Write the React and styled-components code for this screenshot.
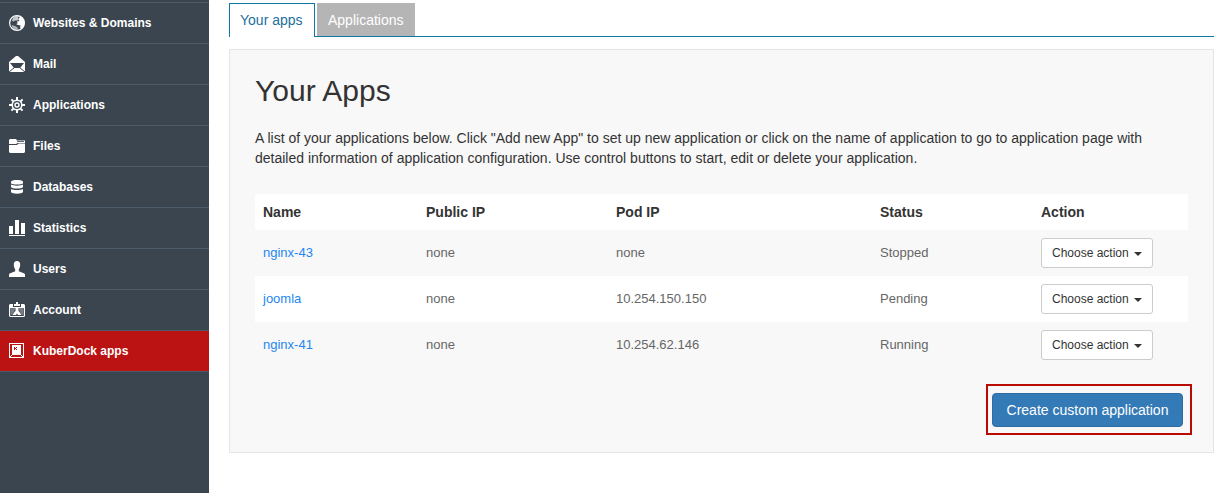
import React from "react";
import styled, { createGlobalStyle } from "styled-components";

const GlobalStyle = createGlobalStyle`
  *, *::before, *::after { box-sizing: border-box; }
  body {
    margin: 0;
    background: #fff;
    color: #333;
    font: 14px/20px "Liberation Sans", Arial, sans-serif;
  }
`;

const Page = styled.div`
  display: flex;
  min-height: 100vh;
`;

const Sidebar = styled.nav`
  flex: 0 0 209px;
  padding-top: 2px;
  background: #3a4550;
`;

const Menu = styled.ul`
  margin: 0;
  padding: 0;
  list-style: none;
  border-bottom: 1px solid #4c5b69;
`;

const MenuLink = styled.a`
  display: flex;
  align-items: center;
  gap: 8px;
  height: 41px;
  padding: 0 9px;
  border-top: 1px solid #4c5b69;
  background: ${(p) => (p.$active ? "#bb1313" : "transparent")};
  color: #fff;
  font-size: 12px;
  font-weight: bold;
  text-decoration: none;
`;

const Icon = styled.svg`
  flex: none;
  width: 16px;
  height: 16px;
  fill: #fff;
`;

const Main = styled.main`
  flex: 1;
  min-width: 0;
  padding: 3px 18px 40px 20px;
`;

const Tabs = styled.div`
  display: flex;
  gap: 2px;
  margin-bottom: 12px;
  border-bottom: 1px solid #0f76a3;
`;

const Tab = styled.a`
  min-width: ${(p) => (p.$active ? "86px" : "98px")};
  height: ${(p) => (p.$active ? "34px" : "33px")};
  margin-bottom: ${(p) => (p.$active ? "-1px" : "0")};
  padding: ${(p) => (p.$active ? "6px 10px" : "7px 11px")};
  border: ${(p) => (p.$active ? "1px solid #0f76a3" : "0")};
  border-bottom: 0;
  background: ${(p) => (p.$active ? "#fff" : "#b5b5b5")};
  color: ${(p) => (p.$active ? "#1d6f9c" : "#fff")};
  line-height: 20px;
  text-decoration: none;
`;

const Panel = styled.section`
  padding: 24px 25px 17px;
  border: 1px solid #e5e5e5;
  background: #f8f8f8;
`;

const Title = styled.h1`
  margin: 0 0 20px;
  font-size: 30px;
  font-weight: normal;
  line-height: 34px;
`;

const Intro = styled.p`
  margin: 0 0 26px;
`;

const Table = styled.table`
  width: 100%;
  table-layout: fixed;
  border-collapse: collapse;
`;

const Column = styled.col`
  width: ${(p) => p.$width}px;
`;

const HeadCell = styled.th`
  padding: 8px;
  background: #fff;
  text-align: left;
`;

const Row = styled.tr`
  background: ${(p) => (p.$striped ? "#fff" : "transparent")};
`;

const Cell = styled.td`
  height: 46px;
  padding: 8px;
  color: #666;
  font-size: 13px;
  line-height: 20px;
  vertical-align: middle;
`;

const AppLink = styled.a`
  color: #1e87f0;
  text-decoration: none;
`;

const SelectBox = styled.span`
  display: grid;
  width: 112px;
  align-items: center;
  > * { grid-area: 1 / 1; }
`;

const Select = styled.select`
  appearance: none;
  width: 100%;
  height: 30px;
  padding: 0 10px;
  border: 1px solid #ccc;
  border-radius: 3px;
  background: #fff;
  color: #333;
  font: 12px/18px "Liberation Sans", Arial, sans-serif;
`;

const Caret = styled.svg`
  justify-self: end;
  width: 8px;
  height: 4px;
  margin: 2px 11px 0 0;
  fill: #333;
  pointer-events: none;
`;

const Footer = styled.div`
  display: flex;
  justify-content: flex-end;
  margin: 16px -4px 0 0;
`;

const Highlight = styled.div`
  padding: 7px 7px 6px 4px;
  border: 2px solid #b90a04;
`;

const CreateButton = styled.button`
  display: block;
  min-width: 191px;
  height: 34px;
  padding: 0 12px;
  border: 1px solid #2e6da4;
  border-radius: 4px;
  background: #337ab7;
  color: #fff;
  font: 14px/20px "Liberation Sans", Arial, sans-serif;
`;

const icons = {
  globe: (
    <>
      <circle cx="8" cy="8" r="7.400" fill="none" stroke="#fff" strokeWidth="1.200" />
      <path d="M4 3 7 1l3 .3L9 3l1 1-1.500 1.500L6 5.400 4.500 6.500 3 6z" opacity=".7" />
      <path d="M10 1c3.400.8 5.500 3.600 5.500 7 0 2.400-1 4.400-2.700 5.800L11 13l.6-2.400L9 10 7 9l1.600-.6L8 6.600 10.500 6 9.400 4.200l1.200-1.400z" />
      <path d="M2.600 10 6 11l2.600 1.400L9 14.600l-3 .2-2.400-2z" opacity=".6" />
    </>
  ),
  mail: (
    <>
      <path d="M7 0h2l7 6v10H0V6z" />
      <path d="M1 7h14l-4 5H5z" fill="#3a4550" />
      <path d="M5.500 11.500 0 16M10.500 11.500 16 16" stroke="#3a4550" />
    </>
  ),
  gear: (
    <>
      <g stroke="#fff" strokeWidth="2">
        <path d="M8 0v3M8 13v3M0 8h3M13 8h3M2.400 2.400l2 2M11.600 11.600l2 2M13.600 2.400l-2 2M4.400 11.600l-2 2" />
      </g>
      <circle cx="8" cy="8" r="4.800" fill="none" stroke="#fff" strokeWidth="1.600" />
      <circle cx="8" cy="8" r="2" fill="none" stroke="#fff" strokeWidth="1.400" />
    </>
  ),
  folder: (
    <>
      <path d="M0 2 1 1h6l1 1.500h8V5H8.500L7 6H0z" />
      <path d="M0 7h8l1.500-1.500H16V14l-1 1H1l-1-1z" />
      <path d="M8 3.500h7" stroke="#3a4550" strokeWidth=".8" />
    </>
  ),
  database: (
    <>
      <path d="M2 3c0-2.600 12-2.600 12 0v1c0 2-12 2-12 0z" />
      <path d="M2 5.600c2 1.400 10 1.400 12 0V8c-1 2-11 2-12 0z" />
      <path d="M2 10c2 1.400 10 1.400 12 0v3c-1 2.300-11 2.300-12 0z" />
    </>
  ),
  chart: <path d="M0 6h4v8H0zM6 0h4v14H6zM12 3h4v11h-4zM0 15h16v1H0z" />,
  user: (
    <path d="M8 0c2.200 0 3.200 1.400 3.200 3.600C11.200 6 10.400 7.600 9.800 8.400v1.800l5 2c.9.400 1.200 1 1.200 2V16H0v-1.800c0-1 .3-1.600 1.200-2l5-2V8.400C5.600 7.600 4.800 6 4.800 3.600 4.800 1.400 5.800 0 8 0z" />
  ),
  badge: (
    <>
      <path d="M7 0h2v2h2v2H5V2h2z" />
      <path d="M1 2h3v3h8V2h3l1 1v11l-1 1H1l-1-1V3zM1.200 6v8h13.600V6z" fillRule="evenodd" />
      <path d="M2 6h4v1L5 10l-2 3H2zM14 6h-4v1l1 3 2 3h1z" opacity=".3" />
      <path d="M6.500 6h3v3l1 1 2 3h-3.500L8 11.500 7 13H3.500l2-3 1-1z" />
    </>
  ),
  dock: (
    <>
      <path d="M0 0h15v15H0zM1 1v13h13V1z" fillRule="evenodd" />
      <path d="M3 2h9v10H3z" />
      <path d="M1 14l2-2M14 14l-2-2" stroke="#fff" />
      <path d="M5 4h1v1h1V4h1v1H7v1h1v1H7V6H6v1H5z" fill="#bb1313" />
    </>
  ),
};

const menu = [
  ["Websites & Domains", "globe"],
  ["Mail", "mail"],
  ["Applications", "gear"],
  ["Files", "folder"],
  ["Databases", "database"],
  ["Statistics", "chart"],
  ["Users", "user"],
  ["Account", "badge"],
  ["KuberDock apps", "dock"],
];

const apps = [
  { name: "nginx-43", publicIp: "none", podIp: "none", status: "Stopped" },
  { name: "joomla", publicIp: "none", podIp: "10.254.150.150", status: "Pending" },
  { name: "nginx-41", publicIp: "none", podIp: "10.254.62.146", status: "Running" },
];

const columns = [
  ["Name", 163],
  ["Public IP", 190],
  ["Pod IP", 264],
  ["Status", 161],
  ["Action", 155],
];

function ActionSelect({ app }) {
  return (
    <SelectBox>
      <Select aria-label={`Action for ${app}`} defaultValue="">
        <option value="">Choose action</option>
        <option value="start">Start</option>
        <option value="edit">Edit</option>
        <option value="delete">Delete</option>
      </Select>
      <Caret viewBox="0 0 8 4" aria-hidden="true">
        <path d="M0 0h8L4 4z" />
      </Caret>
    </SelectBox>
  );
}

export default function App() {
  return (
    <Page>
      <GlobalStyle />
      <Sidebar aria-label="Main menu">
        <Menu>
          {menu.map(([label, icon]) => (
            <li key={label}>
              <MenuLink href="#" $active={icon === "dock"}>
                <Icon viewBox="0 0 16 16" aria-hidden="true">{icons[icon]}</Icon>
                {label}
              </MenuLink>
            </li>
          ))}
        </Menu>
      </Sidebar>
      <Main>
        <Tabs>
          <Tab href="#" $active>Your apps</Tab>
          <Tab href="#">Applications</Tab>
        </Tabs>
        <Panel>
          <Title>Your Apps</Title>
          <Intro>
            A list of your applications below. Click "Add new App" to set up new application or click on
            the name of application to go to application page with detailed information of application
            configuration. Use control buttons to start, edit or delete your application.
          </Intro>
          <Table>
            <colgroup>
              {columns.map(([label, width]) => <Column key={label} $width={width} />)}
            </colgroup>
            <thead>
              <tr>
                {columns.map(([label]) => <HeadCell key={label} scope="col">{label}</HeadCell>)}
              </tr>
            </thead>
            <tbody>
              {apps.map((app, i) => (
                <Row key={app.name} $striped={i % 2 === 1}>
                  <Cell><AppLink href="#">{app.name}</AppLink></Cell>
                  <Cell>{app.publicIp}</Cell>
                  <Cell>{app.podIp}</Cell>
                  <Cell>{app.status}</Cell>
                  <Cell><ActionSelect app={app.name} /></Cell>
                </Row>
              ))}
            </tbody>
          </Table>
          <Footer>
            <Highlight>
              <CreateButton type="button">Create custom application</CreateButton>
            </Highlight>
          </Footer>
        </Panel>
      </Main>
    </Page>
  );
}
